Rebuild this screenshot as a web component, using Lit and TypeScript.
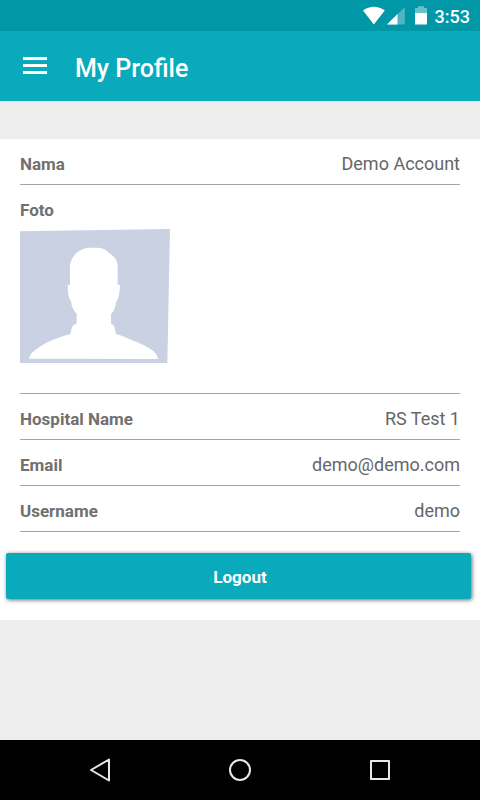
import { LitElement, html, css } from "lit";
import { customElement } from "lit/decorators.js";

@customElement("status-bar")
class StatusBar extends LitElement {
  static styles = css`
    :host {
      display: flex;
      align-items: center;
      justify-content: flex-end;
      height: 31px;
      padding: 0 10px;
      background: #0097a7;
      color: #fff;
      font-size: 18px;
      font-weight: 500;
      line-height: 32px;
    }
    .icons {
      display: block;
      margin-right: 7px;
    }
    .time {
      padding-top: 2px;
    }
  `;
  render() {
    return html`
      <svg class="icons" width="66" height="20" viewBox="362 6 66 20" aria-hidden="true">
        <path fill="#fff" d="M363 10.500 Q373.800 3 384.800 10.500 L373.800 24.500 Z" />
        <path fill="#4db6c1" d="M387 24.500 L404.800 7 V24.500 Z" />
        <path fill="#fff" d="M387 24.500 L397.500 14 V24.500 Z" />
        <path fill="#66c1ca" d="M415 13 V8 H418 V6.300 H424 V8 H427 V13 Z" />
        <path fill="#fff" d="M415 13 H427 V24.500 H415 Z" />
      </svg>
      <time class="time">3:53</time>
    `;
  }
}

@customElement("profile-field")
class ProfileField extends LitElement {
  static properties = { label: {}, value: {} };
  declare label: string;
  declare value: string;
  static styles = css`
    :host {
      display: flex;
      flex-wrap: wrap;
      justify-content: space-between;
      padding: 15px 0 10px;
      border-bottom: 1px solid #a3a3a3;
      line-height: 20px;
    }
    .label {
      font-weight: 700;
      color: #707070;
    }
    .value {
      font-size: 18px;
      color: #666;
    }
    .media {
      display: block;
      flex-basis: 100%;
    }
  `;
  render() {
    return html`
      <span class="label">${this.label}</span>
      ${this.value ? html`<span class="value">${this.value}</span>` : ""}
      <slot class="media"></slot>
    `;
  }
}

@customElement("app-root")
class AppRoot extends LitElement {
  static styles = css`
    :host {
      display: flex;
      flex-direction: column;
      min-height: 100vh;
      background: #ededed;
      font-family: Roboto, "Liberation Sans", sans-serif;
      font-size: 17px;
    }
    button {
      border: 0;
      padding: 0;
      background: none;
      font: inherit;
      color: inherit;
      cursor: pointer;
    }
    svg {
      display: block;
    }
    .header {
      display: flex;
      align-items: center;
      gap: 28px;
      height: 70px;
      padding: 0 23px;
      background: #08aabc;
      color: #fff;
    }
    .title {
      margin: 0;
      padding-top: 6px;
      font-size: 25px;
      font-weight: 500;
      line-height: 32px;
    }
    .main {
      flex: 1;
      padding: 38px 0;
    }
    .card {
      background: #fff;
      padding-bottom: 21px;
    }
    .fields {
      padding: 0 20px;
    }
    .photo {
      width: 150px;
      height: 134px;
      margin: 9px 0 20px;
    }
    .actions {
      padding: 21px 9px 0 6px;
    }
    .logout {
      display: block;
      width: 100%;
      height: 46px;
      padding: 2px 0 0 3px;
      border-radius: 2px;
      background: #08aabc;
      box-shadow: 1px 1px 4px rgba(0, 0, 0, 0.6);
      color: #fff;
      font-weight: 700;
    }
    .nav {
      display: flex;
      justify-content: center;
      align-items: center;
      gap: 116px;
      height: 60px;
      background: #000;
    }
  `;
  render() {
    return html`
      <status-bar></status-bar>
      <header class="header">
        <button aria-label="Menu">
          <svg width="24" height="20" viewBox="0 0 24 20" fill="#fff">
            <path d="M0 1h24v3H0zM0 8h24v3H0zM0 15h24v3H0z" />
          </svg>
        </button>
        <h1 class="title">My Profile</h1>
      </header>
      <main class="main">
        <section class="card">
          <div class="fields">
            <profile-field label="Nama" value="Demo Account"></profile-field>
            <profile-field label="Foto">
              <svg class="photo" viewBox="30 27 450 402" role="img" aria-label="Foto">
                <path fill="#cad1e3" d="M30 34 L480 27 L472 429 H30 Z" />
                <path
                  fill="#fff"
                  d="M57 416 C60 402 70 394 84 384 C110 366 150 350 180 343 C184 334 184 324 188 317 C191 313 197 315 200 309 V281 C190 272 184 258 183 243 C175 234 174 215 173 195 H180 V135 C184 108 208 84 238 83 H264 C280 84 290 90 298 100 C312 108 322 120 323 137 V195 H330 C329 215 327 236 319 244 C317 260 312 274 303 283 V310 C307 315 311 313 313 320 C315 328 316 336 319 343 C336 345 350 355 366 361 C390 370 412 379 430 393 C438 400 442 407 444 417 Z"
                />
              </svg>
            </profile-field>
            <profile-field label="Hospital Name" value="RS Test 1"></profile-field>
            <profile-field label="Email" value="demo@demo.com"></profile-field>
            <profile-field label="Username" value="demo"></profile-field>
          </div>
          <div class="actions">
            <button class="logout">Logout</button>
          </div>
        </section>
      </main>
      <nav class="nav">
        <button aria-label="Back">
          <svg width="24" height="26" viewBox="0 0 24 26" fill="none" stroke="#e8e8e8" stroke-width="2" stroke-linejoin="round">
            <path d="M21 2.500 V23.500 L3 13 Z" />
          </svg>
        </button>
        <button aria-label="Home">
          <svg width="24" height="26" viewBox="0 0 24 26" fill="none" stroke="#e8e8e8" stroke-width="2">
            <circle cx="12" cy="13" r="10" />
          </svg>
        </button>
        <button aria-label="Recent apps">
          <svg width="24" height="26" viewBox="0 0 24 26" fill="none" stroke="#e8e8e8" stroke-width="2" stroke-linejoin="round">
            <path d="M3 4 H21 V22 H3 Z" />
          </svg>
        </button>
      </nav>
    `;
  }
}
